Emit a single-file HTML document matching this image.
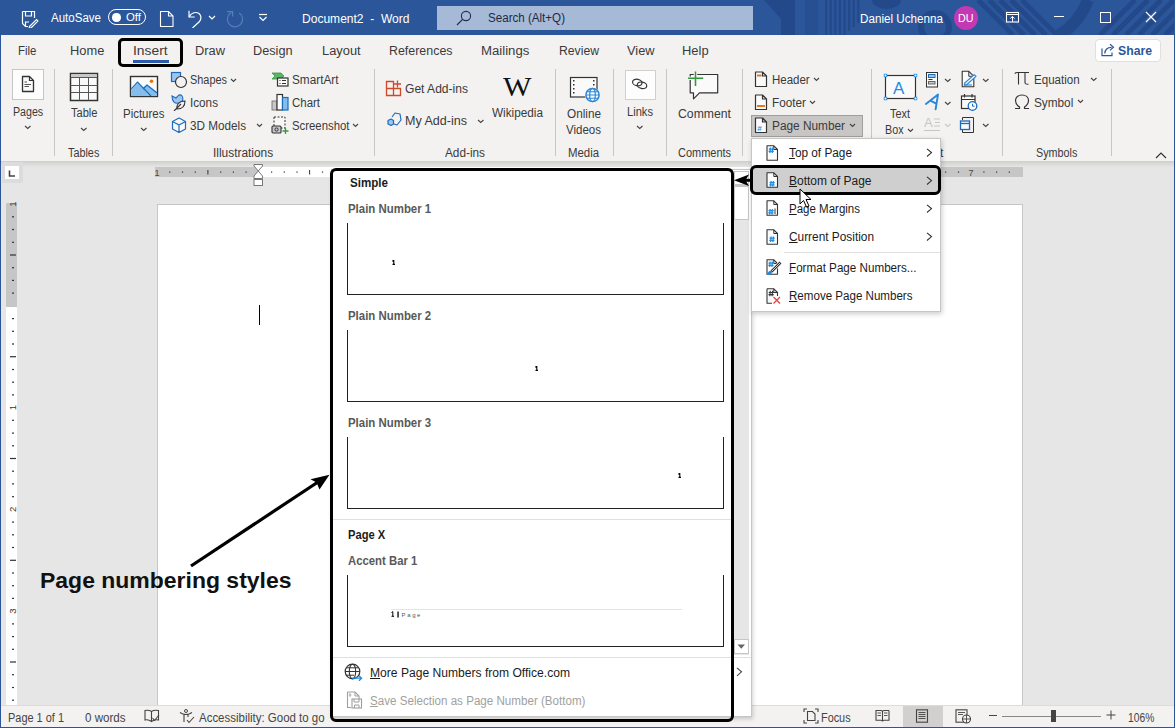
<!DOCTYPE html>
<html><head><meta charset="utf-8"><style>
html,body{margin:0;padding:0;}
body{width:1175px;height:728px;position:relative;overflow:hidden;background:#e6e6e6;font-family:"Liberation Sans", sans-serif;}
body>div,body>svg{position:absolute;box-sizing:border-box;}
.t{white-space:pre;}
</style></head><body>
<div style="left:0px;top:0px;width:1175px;height:35px;background:#2b579a"></div>
<svg style="left:755px;top:0px;" width="420" height="35" viewBox="0 0 420 35"><g transform="translate(-755 0)"><g fill="#23498a">
      <path d="M764 0 H795 V35 H781 V19 Z"/>
      <rect x="805" y="0" width="13" height="35" opacity="0.5"/>
      <rect x="825.0" y="0" width="2.2" height="35"/><rect x="829.6" y="0" width="2.2" height="35"/><rect x="834.2" y="0" width="2.2" height="35"/><rect x="838.8" y="0" width="2.2" height="35"/><rect x="843.4" y="0" width="2.2" height="35"/><rect x="848.0" y="0" width="2.2" height="31"/><rect x="852.6" y="0" width="2.2" height="27"/><rect x="857.2" y="0" width="2.2" height="23"/>
      <path d="M872 0 A14.5 9 0 0 0 901 0 Z"/>
      </g>
      <circle cx="935" cy="27" r="14" fill="none" stroke="#23498a" stroke-width="6"/>
      <g stroke="#23498a" stroke-width="5"><path d="M978 0 L1013 35" /><path d="M989 0 L1024 35" /><path d="M1000 0 L1035 35" /><path d="M1011 0 L1046 35" /><path d="M1022 0 L1057 35" /></g>
      <path d="M1088 0 C1082 15 1072 28 1058 36" fill="none" stroke="#23498a" stroke-width="12"/>
      <g stroke="#23498a" stroke-width="5"><path d="M1100 35 L1135 0" /><path d="M1113 35 L1148 0" /><path d="M1126 35 L1161 0" /><path d="M1139 35 L1174 0" /><path d="M1152 35 L1187 0" /><path d="M1165 35 L1200 0" /></g></g></svg>
<div style="left:0px;top:35px;width:1175px;height:126px;background:#f3f2f1"></div>
<div style="left:0px;top:161px;width:1175px;height:6px;background:linear-gradient(#cfcecd,#e6e6e6)"></div>
<div style="left:0px;top:705px;width:1175px;height:22px;background:#f3f2f1;border-top:1px solid #dedcda"></div>
<div style="left:0px;top:0px;width:1px;height:728px;background:#2b579a"></div>
<div style="left:1174px;top:0px;width:1px;height:728px;background:#2b579a"></div>
<div style="left:0px;top:727px;width:1175px;height:1px;background:#2b579a"></div>
<svg style="left:21px;top:10px;" width="18" height="18" viewBox="0 0 18 18"><path d="M1.5 1.5 H13.5 V8" fill="none" stroke="#fff" stroke-width="1.2"/><path d="M1.5 1.5 V13.5 L4.5 16.5 H7" fill="none" stroke="#fff" stroke-width="1.2"/><path d="M4.5 1.5 V6 H10.5 V1.5" fill="none" stroke="#fff" stroke-width="1.2"/><path d="M4.5 16.5 V12 H8" fill="none" stroke="#fff" stroke-width="1.2"/><path d="M8.5 16.5 L15.5 9.5 L17 11 L10 18 L8 18 Z" fill="none" stroke="#fff" stroke-width="1.1"/></svg>
<div class="t" style="left:51px;top:11.60px;font-size:12.5px;line-height:12.5px;font-weight:normal;color:#ffffff;transform:scaleX(0.9222);transform-origin:0 0;">AutoSave</div>
<div style="left:108px;top:9px;width:38px;height:16px;border:1.2px solid #fff;border-radius:8px"></div>
<div style="left:112px;top:13px;width:8.5px;height:8.5px;background:#fff;border-radius:50%"></div>
<div class="t" style="left:126px;top:11.54px;font-size:11px;line-height:11px;font-weight:normal;color:#ffffff;transform:scaleX(1.0356);transform-origin:0 0;">Off</div>
<svg style="left:159px;top:10px;" width="16" height="18" viewBox="0 0 16 18"><path d="M1.5 1.5 H9.5 L14 6 V16.5 H1.5 Z M9.5 1.5 V6 H14" fill="none" stroke="#fff" stroke-width="1.1"/></svg>
<svg style="left:187px;top:10px;" width="18" height="18" viewBox="0 0 18 18"><path d="M2 0.8 V7 H7.7" fill="none" stroke="#fff" stroke-width="1.2"/><path d="M2.3 6.6 C4.5 2.5 9 1.5 12 3.5 C14.5 5.5 14.5 9 12.5 11.5 L5.5 18" fill="none" stroke="#fff" stroke-width="1.2"/></svg>
<svg style="left:208px;top:15px;" width="8" height="5.5" viewBox="0 0 8 5.5"><path d="M1 1 L4.0 4.0 L7 1" fill="none" stroke="#fff" stroke-width="1.2"/></svg>
<svg style="left:226px;top:10px;" width="18" height="18" viewBox="0 0 18 18"><path d="M13.2 2.9 A7.6 7.6 0 1 1 5.2 2.6" fill="none" stroke="#5a7db8" stroke-width="1.2"/><path d="M1.2 1.6 H6.6 V6.5" fill="none" stroke="#5a7db8" stroke-width="1.2"/></svg>
<svg style="left:258px;top:13px;" width="10" height="9" viewBox="0 0 10 9"><path d="M1 1.5 H9" stroke="#fff" stroke-width="1.2"/><path d="M1.5 4 L5 7.5 L8.5 4" fill="none" stroke="#fff" stroke-width="1.2"/></svg>
<div class="t" style="left:302px;top:13.08px;font-size:12px;line-height:12px;font-weight:normal;color:#ffffff;transform:scaleX(1.0032);transform-origin:0 0;">Document2  -  Word</div>
<div style="left:437px;top:6px;width:316px;height:24px;background:#a6b9d6"></div>
<svg style="left:455px;top:10px;" width="18" height="16" viewBox="0 0 18 16"><circle cx="11" cy="6" r="4.6" fill="none" stroke="#1f2f4f" stroke-width="1.1"/><path d="M7.6 9.4 L2 15" stroke="#1f2f4f" stroke-width="1.2"/></svg>
<div class="t" style="left:487.5px;top:12.38px;font-size:12px;line-height:12px;font-weight:normal;color:#1b2a47;transform:scaleX(0.9661);transform-origin:0 0;">Search (Alt+Q)</div>
<div class="t" style="left:860px;top:13.08px;font-size:12px;line-height:12px;font-weight:normal;color:#ffffff;transform:scaleX(0.9720);transform-origin:0 0;">Daniel Uchenna</div>
<div style="left:954px;top:6px;width:24px;height:24px;background:#c239b3;border-radius:50%"></div>
<div class="t" style="left:958px;top:12.74px;font-size:11px;line-height:11px;font-weight:normal;color:#fff;transform:scaleX(0.9754);transform-origin:0 0;">DU</div>
<svg style="left:1005px;top:11px;" width="15" height="12" viewBox="0 0 15 12"><rect x="1.5" y="1.5" width="12" height="9.5" fill="none" stroke="#fff" stroke-width="1.1"/><path d="M1.5 3.5 H13.5" stroke="#fff" stroke-width="1"/><path d="M7.5 11 V5.5 M5.3 7.6 L7.5 5.4 L9.7 7.6" fill="none" stroke="#fff" stroke-width="1"/></svg>
<div style="left:1054px;top:16px;width:10px;height:1.1px;background:#fff"></div>
<div style="left:1100px;top:12px;width:10.5px;height:10.5px;border:1.1px solid #fff"></div>
<svg style="left:1145px;top:11px;" width="12" height="12" viewBox="0 0 12 12"><path d="M1 1 L11 11 M11 1 L1 11" stroke="#fff" stroke-width="1.2"/></svg>
<div class="t" style="left:18.4px;top:44.68px;font-size:12px;line-height:12px;font-weight:normal;color:#3a3a3a;transform:scaleX(0.9512);transform-origin:0 0;">File</div>
<div class="t" style="left:70px;top:44.68px;font-size:12px;line-height:12px;font-weight:normal;color:#3a3a3a;transform:scaleX(1.0714);transform-origin:0 0;">Home</div>
<div class="t" style="left:133.3px;top:44.68px;font-size:12px;line-height:12px;font-weight:normal;color:#3a3a3a;transform:scaleX(1.1527);transform-origin:0 0;">Insert</div>
<div class="t" style="left:195px;top:44.68px;font-size:12px;line-height:12px;font-weight:normal;color:#3a3a3a;transform:scaleX(1.0708);transform-origin:0 0;">Draw</div>
<div class="t" style="left:253px;top:44.68px;font-size:12px;line-height:12px;font-weight:normal;color:#3a3a3a;transform:scaleX(1.0600);transform-origin:0 0;">Design</div>
<div class="t" style="left:321.7px;top:44.68px;font-size:12px;line-height:12px;font-weight:normal;color:#3a3a3a;transform:scaleX(1.0713);transform-origin:0 0;">Layout</div>
<div class="t" style="left:389px;top:44.68px;font-size:12px;line-height:12px;font-weight:normal;color:#3a3a3a;transform:scaleX(1.0346);transform-origin:0 0;">References</div>
<div class="t" style="left:481px;top:44.68px;font-size:12px;line-height:12px;font-weight:normal;color:#3a3a3a;transform:scaleX(1.0996);transform-origin:0 0;">Mailings</div>
<div class="t" style="left:559px;top:44.68px;font-size:12px;line-height:12px;font-weight:normal;color:#3a3a3a;transform:scaleX(1.0163);transform-origin:0 0;">Review</div>
<div class="t" style="left:626.5px;top:44.68px;font-size:12px;line-height:12px;font-weight:normal;color:#3a3a3a;transform:scaleX(1.0660);transform-origin:0 0;">View</div>
<div class="t" style="left:681.7px;top:44.68px;font-size:12px;line-height:12px;font-weight:normal;color:#3a3a3a;transform:scaleX(1.0775);transform-origin:0 0;">Help</div>
<div style="left:133px;top:60px;width:35.5px;height:3px;background:#2a5aa8"></div>
<div style="left:118px;top:37.5px;width:65px;height:29px;border:3px solid #000;border-radius:5px"></div>
<div style="left:1094.5px;top:38.5px;width:66.5px;height:23px;background:#fff;border:1px solid #e1dfdd;border-radius:4px"></div>
<svg style="left:1101px;top:43px;" width="14" height="14" viewBox="0 0 14 14"><path d="M1 5.5 V12.6 H11 V9.5" fill="none" stroke="#2b579a" stroke-width="1.2"/><path d="M3.8 10.5 C4 6 7 4.3 10.6 4.3" fill="none" stroke="#2b579a" stroke-width="1.2"/><path d="M9 1.2 L12.5 4.3 L9 7.4" fill="none" stroke="#2b579a" stroke-width="1.2"/></svg>
<div class="t" style="left:1118px;top:45.08px;font-size:12px;line-height:12px;font-weight:bold;color:#2b579a;transform:scaleX(1.0192);transform-origin:0 0;">Share</div>
<div style="left:54px;top:69px;width:1px;height:87px;background:#c8c6c4"></div>
<div style="left:112px;top:69px;width:1px;height:87px;background:#c8c6c4"></div>
<div style="left:374px;top:69px;width:1px;height:87px;background:#c8c6c4"></div>
<div style="left:555px;top:69px;width:1px;height:87px;background:#c8c6c4"></div>
<div style="left:613px;top:69px;width:1px;height:87px;background:#c8c6c4"></div>
<div style="left:666px;top:69px;width:1px;height:87px;background:#c8c6c4"></div>
<div style="left:742px;top:69px;width:1px;height:87px;background:#c8c6c4"></div>
<div style="left:871px;top:69px;width:1px;height:87px;background:#c8c6c4"></div>
<div style="left:1002px;top:69px;width:1px;height:87px;background:#c8c6c4"></div>
<div style="left:1111px;top:69px;width:1px;height:87px;background:#c8c6c4"></div>
<div class="t" style="left:68.2px;top:147.28px;font-size:12px;line-height:12px;font-weight:normal;color:#3a3a3a;transform:scaleX(0.9023);transform-origin:0 0;">Tables</div>
<div class="t" style="left:213.4px;top:147.28px;font-size:12px;line-height:12px;font-weight:normal;color:#3a3a3a;transform:scaleX(0.9917);transform-origin:0 0;">Illustrations</div>
<div class="t" style="left:444.9px;top:147.28px;font-size:12px;line-height:12px;font-weight:normal;color:#3a3a3a;transform:scaleX(0.9831);transform-origin:0 0;">Add-ins</div>
<div class="t" style="left:568.3px;top:147.28px;font-size:12px;line-height:12px;font-weight:normal;color:#3a3a3a;transform:scaleX(0.9514);transform-origin:0 0;">Media</div>
<div class="t" style="left:677.6px;top:147.28px;font-size:12px;line-height:12px;font-weight:normal;color:#3a3a3a;transform:scaleX(0.9153);transform-origin:0 0;">Comments</div>
<div class="t" style="left:1036.4px;top:147.28px;font-size:12px;line-height:12px;font-weight:normal;color:#3a3a3a;transform:scaleX(0.8975);transform-origin:0 0;">Symbols</div>
<svg style="left:1155px;top:151.5px;" width="12" height="7" viewBox="0 0 12 7"><path d="M1 6 L6 1 L11 6" fill="none" stroke="#333" stroke-width="1.2"/></svg>
<div style="left:12px;top:69px;width:32px;height:31px;background:#fdfdfd;border:1px solid #c8c6c4"></div>
<svg style="left:21px;top:75px;" width="14" height="18" viewBox="0 0 14 18"><path d="M1.5 1.5 H8.5 L12.5 5.5 V16.5 H1.5 Z" fill="#fafafa" stroke="#333" stroke-width="1.3" stroke-linejoin="round"/><path d="M8.5 1.5 V5.5 H12.5" fill="none" stroke="#333" stroke-width="1.2"/><path d="M3.5 7 H6 M3.5 9.5 H10 M3.5 11.5 H8" stroke="#555" stroke-width="1"/></svg>
<div class="t" style="left:12.6px;top:105.88px;font-size:12px;line-height:12px;font-weight:normal;color:#3a3a3a;transform:scaleX(0.8874);transform-origin:0 0;">Pages</div>
<svg style="left:24px;top:125px;" width="7.5" height="5" viewBox="0 0 7.5 5"><path d="M1 1 L3.75 3.5 L6.5 1" fill="none" stroke="#444" stroke-width="1.1"/></svg>
<svg style="left:69px;top:72px;" width="30" height="30" viewBox="0 0 30 30"><rect x="1.5" y="1.5" width="27" height="27" fill="#fafafa" stroke="#333" stroke-width="1.5"/><rect x="2.2" y="2.2" width="25.6" height="3.6" fill="#c8c8c8"/><path d="M1.5 5.5 H28.5 M1.5 13.5 H28.5 M1.5 20.5 H28.5 M10.5 5.5 V28.5 M19.5 5.5 V28.5" stroke="#555" stroke-width="1"/></svg>
<div class="t" style="left:70.7px;top:107.38px;font-size:12px;line-height:12px;font-weight:normal;color:#3a3a3a;transform:scaleX(0.9237);transform-origin:0 0;">Table</div>
<svg style="left:80px;top:126.5px;" width="7.5" height="5" viewBox="0 0 7.5 5"><path d="M1 1 L3.75 3.5 L6.5 1" fill="none" stroke="#444" stroke-width="1.1"/></svg>
<svg style="left:129px;top:75px;" width="30" height="23" viewBox="0 0 30 23"><rect x="1.5" y="1.5" width="27" height="20" fill="#fafafa" stroke="#333" stroke-width="1.4"/><path d="M2 14 L8.5 7 L18 17 L14 21 Z" fill="#83beec"/><path d="M2.2 14 V21 H19 L8.5 7 Z" fill="#83beec"/><path d="M13 13 L18 9.5 L28 17 V21 H19 Z" fill="#83beec"/><path d="M2 14 L8.5 7 L22 21 M14 14 L18 10 L28 18" fill="none" stroke="#1c6bbd" stroke-width="1.1"/><circle cx="22.5" cy="6.3" r="1.8" fill="#e3730b"/></svg>
<div class="t" style="left:123.3px;top:108.38px;font-size:12px;line-height:12px;font-weight:normal;color:#3a3a3a;transform:scaleX(0.9548);transform-origin:0 0;">Pictures</div>
<svg style="left:140px;top:127px;" width="7.5" height="5" viewBox="0 0 7.5 5"><path d="M1 1 L3.75 3.5 L6.5 1" fill="none" stroke="#444" stroke-width="1.1"/></svg>
<svg style="left:170px;top:71px;" width="18" height="18" viewBox="0 0 18 18"><rect x="1.5" y="1.5" width="9" height="9" fill="#9cc6ef" stroke="#1c6bbd" stroke-width="1.2"/><circle cx="11" cy="11" r="5.5" fill="#f3f2f1" stroke="#333" stroke-width="1.2"/></svg>
<div class="t" style="left:190px;top:73.58px;font-size:12px;line-height:12px;font-weight:normal;color:#3a3a3a;transform:scaleX(0.9090);transform-origin:0 0;">Shapes</div>
<svg style="left:230px;top:77.5px;" width="7" height="5" viewBox="0 0 7 5"><path d="M1 1 L3.5 3.5 L6 1" fill="none" stroke="#444" stroke-width="1.1"/></svg>
<svg style="left:170px;top:93px;" width="18" height="18" viewBox="0 0 18 18"><path d="M2 3 C2 9 5 11 9 10 C13 9 14 6 12 3 C11 1.5 9 1.5 8 3 L6 5 Z" fill="#9cc6ef" stroke="#1c6bbd" stroke-width="1.1"/><path d="M7 16 C6 12 9 8 15 8 C15 13 12 16 7 16 Z M4 18 L11 11" fill="#f3f2f1" stroke="#333" stroke-width="1.1"/></svg>
<div class="t" style="left:190px;top:96.58px;font-size:12px;line-height:12px;font-weight:normal;color:#3a3a3a;transform:scaleX(0.9760);transform-origin:0 0;">Icons</div>
<svg style="left:171px;top:117px;" width="16" height="17" viewBox="0 0 16 17"><path d="M8 1 L14.5 4.5 V12 L8 15.5 L1.5 12 V4.5 Z M1.5 4.5 L8 8 L14.5 4.5 M8 8 V15.5" fill="#fafafa" stroke="#1c6bbd" stroke-width="1.2" stroke-linejoin="round"/></svg>
<div class="t" style="left:190px;top:119.58px;font-size:12px;line-height:12px;font-weight:normal;color:#3a3a3a;transform:scaleX(0.9763);transform-origin:0 0;">3D Models</div>
<svg style="left:256px;top:123px;" width="7" height="5" viewBox="0 0 7 5"><path d="M1 1 L3.5 3.5 L6 1" fill="none" stroke="#444" stroke-width="1.1"/></svg>
<svg style="left:271px;top:72px;" width="18" height="15" viewBox="0 0 18 15"><path d="M1 1 H10 L13 4 L10 7 H1 L4 4 Z" fill="#5fb36b" stroke="#2e9b3e" stroke-width="0.8"/><rect x="6.5" y="6" width="10.5" height="8" fill="#fafafa" stroke="#333" stroke-width="1.2"/><path d="M8.5 8.5 H9.5 M11 8.5 H15 M8.5 11.5 H9.5 M11 11.5 H15" stroke="#333" stroke-width="1"/></svg>
<div class="t" style="left:291.5px;top:73.58px;font-size:12px;line-height:12px;font-weight:normal;color:#3a3a3a;transform:scaleX(0.9822);transform-origin:0 0;">SmartArt</div>
<svg style="left:271px;top:93px;" width="18" height="18" viewBox="0 0 18 18"><rect x="1" y="8" width="5" height="9" fill="#c8c8c8" stroke="#666" stroke-width="0.8"/><rect x="6" y="1.5" width="5.5" height="15.5" fill="#fff" stroke="#333" stroke-width="1.2"/><rect x="11.5" y="4.5" width="5.5" height="12.5" fill="#83beec" stroke="#1c6bbd" stroke-width="1.2"/></svg>
<div class="t" style="left:291.5px;top:96.58px;font-size:12px;line-height:12px;font-weight:normal;color:#3a3a3a;transform:scaleX(0.9542);transform-origin:0 0;">Chart</div>
<svg style="left:271px;top:116px;" width="19" height="18" viewBox="0 0 19 18"><rect x="3" y="1" width="11" height="11" fill="#f7f7f7" stroke="#333" stroke-width="1" stroke-dasharray="2 1.5"/><rect x="1" y="10" width="9" height="7" rx="1" fill="#c8c8c8" stroke="#333" stroke-width="1.1"/><circle cx="5.5" cy="13.5" r="1.6" fill="none" stroke="#333" stroke-width="1"/><path d="M14.5 12 V18 M11.5 15 H17.5" stroke="#2e9b3e" stroke-width="1.3"/></svg>
<div class="t" style="left:291.5px;top:119.58px;font-size:12px;line-height:12px;font-weight:normal;color:#3a3a3a;transform:scaleX(0.9472);transform-origin:0 0;">Screenshot</div>
<svg style="left:352px;top:122.5px;" width="7" height="5" viewBox="0 0 7 5"><path d="M1 1 L3.5 3.5 L6 1" fill="none" stroke="#444" stroke-width="1.1"/></svg>
<svg style="left:385px;top:80px;" width="18" height="17" viewBox="0 0 18 17"><path d="M1.5 1.5 H8.5 V15.5 H1.5 Z M1.5 8.5 H15.5 V15.5 H8.5" fill="none" stroke="#d24726" stroke-width="1.3"/><path d="M12.5 0.5 V7.5 M9 4 H16" stroke="#d24726" stroke-width="1.3"/></svg>
<div class="t" style="left:405px;top:82.58px;font-size:12px;line-height:12px;font-weight:normal;color:#3a3a3a;transform:scaleX(1.0047);transform-origin:0 0;">Get Add-ins</div>
<svg style="left:385px;top:111px;" width="18" height="18" viewBox="0 0 18 18"><path d="M7 6 L10 2 L15 3 L16 9 L12 14 L9 13" fill="none" stroke="#1c6bbd" stroke-width="1.2" stroke-linejoin="round"/><path d="M3 9.5 L6 8 L8.5 9.5 V13 L6 14.5 L3 13 Z" fill="#9cc6ef" stroke="#1c6bbd" stroke-width="1.2" stroke-linejoin="round"/></svg>
<div class="t" style="left:405px;top:115.38px;font-size:12px;line-height:12px;font-weight:normal;color:#3a3a3a;transform:scaleX(1.0445);transform-origin:0 0;">My Add-ins</div>
<svg style="left:476.5px;top:118.5px;" width="7.5" height="5" viewBox="0 0 7.5 5"><path d="M1 1 L3.75 3.5 L6.5 1" fill="none" stroke="#444" stroke-width="1.1"/></svg>
<div class="t" style="left:503px;top:73.68px;font-size:27px;line-height:27px;font-weight:normal;color:#111;transform:scaleX(1.1183);transform-origin:0 0;font-family:'Liberation Serif',serif;">W</div>
<div class="t" style="left:492.3px;top:107.08px;font-size:12px;line-height:12px;font-weight:normal;color:#3a3a3a;transform:scaleX(0.9802);transform-origin:0 0;">Wikipedia</div>
<svg style="left:568px;top:75px;" width="34" height="30" viewBox="0 0 34 30"><rect x="2.5" y="2.5" width="26.5" height="19.5" fill="#fafafa" stroke="#333" stroke-width="1.2"/><g fill="#333"><rect x="5" y="5" width="1.5" height="1.5"/><rect x="5" y="9" width="1.5" height="1.5"/><rect x="5" y="13" width="1.5" height="1.5"/><rect x="5" y="17" width="1.5" height="1.5"/><rect x="25" y="5" width="1.5" height="1.5"/><rect x="25" y="9" width="1.5" height="1.5"/></g><circle cx="24.5" cy="20" r="7.6" fill="#f3f2f1"/><circle cx="24.5" cy="20" r="6.6" fill="#fafafa" stroke="#2b88d8" stroke-width="1.5"/><ellipse cx="24.5" cy="20" rx="2.8" ry="6.6" fill="none" stroke="#2b88d8" stroke-width="1.2"/><path d="M18 20 H31 M19 16.8 H30 M19 23.2 H30" stroke="#2b88d8" stroke-width="1.1"/></svg>
<div class="t" style="left:566.8px;top:108.08px;font-size:12px;line-height:12px;font-weight:normal;color:#3a3a3a;transform:scaleX(0.9802);transform-origin:0 0;">Online</div>
<div class="t" style="left:566px;top:124.08px;font-size:12px;line-height:12px;font-weight:normal;color:#3a3a3a;transform:scaleX(0.9593);transform-origin:0 0;">Videos</div>
<div style="left:624.5px;top:69.5px;width:31.5px;height:30px;background:#fdfdfd;border:1px solid #d2d0ce"></div>
<svg style="left:631px;top:77px;" width="18" height="14" viewBox="0 0 18 14"><ellipse cx="6.3" cy="5.5" rx="4.8" ry="3.2" fill="none" stroke="#333" stroke-width="1.2" transform="rotate(12 6.3 5.5)"/><ellipse cx="11" cy="8.3" rx="4.8" ry="3.2" fill="none" stroke="#333" stroke-width="1.2" transform="rotate(12 11 8.3)"/></svg>
<div class="t" style="left:626.5px;top:106.08px;font-size:12px;line-height:12px;font-weight:normal;color:#3a3a3a;transform:scaleX(0.9281);transform-origin:0 0;">Links</div>
<svg style="left:636px;top:125px;" width="7.5" height="5" viewBox="0 0 7.5 5"><path d="M1 1 L3.75 3.5 L6.5 1" fill="none" stroke="#444" stroke-width="1.1"/></svg>
<svg style="left:686px;top:70px;" width="34" height="32" viewBox="0 0 34 32"><path d="M4.2 4.5 H31.7 V22.8 H13.5 L7.5 28.9 V22.8 H4.2 Z" fill="#fafafa" stroke="#333" stroke-width="1.2" stroke-linejoin="round"/><path d="M9.5 1.4 V15.9 M2 8.3 H17.2" stroke="#f3f2f1" stroke-width="3.5"/><path d="M9.5 1.4 V15.9 M2 8.3 H17.2" stroke="#2e9b3e" stroke-width="1.5"/></svg>
<div class="t" style="left:677.6px;top:107.68px;font-size:12px;line-height:12px;font-weight:normal;color:#3a3a3a;transform:scaleX(1.0189);transform-origin:0 0;">Comment</div>
<svg style="left:754px;top:71px;" width="14" height="17" viewBox="0 0 14 17"><path d="M1.5 1 H8.5 L12.5 5 V15.5 H1.5 Z M8.5 1 V5 H12.5" fill="#fafafa" stroke="#333" stroke-width="1.2" stroke-linejoin="round"/><rect x="3" y="3.5" width="4.5" height="2" fill="#e37620"/></svg>
<div class="t" style="left:772px;top:73.58px;font-size:12px;line-height:12px;font-weight:normal;color:#3a3a3a;transform:scaleX(0.9578);transform-origin:0 0;">Header</div>
<svg style="left:813px;top:77px;" width="7" height="5" viewBox="0 0 7 5"><path d="M1 1 L3.5 3.5 L6 1" fill="none" stroke="#444" stroke-width="1.1"/></svg>
<svg style="left:754px;top:94px;" width="14" height="17" viewBox="0 0 14 17"><path d="M1.5 1 H8.5 L12.5 5 V15.5 H1.5 Z M8.5 1 V5 H12.5" fill="#fafafa" stroke="#333" stroke-width="1.2" stroke-linejoin="round"/><rect x="3" y="11" width="8" height="2" fill="#e37620"/></svg>
<div class="t" style="left:772px;top:96.58px;font-size:12px;line-height:12px;font-weight:normal;color:#3a3a3a;transform:scaleX(0.9802);transform-origin:0 0;">Footer</div>
<svg style="left:809px;top:99.8px;" width="7" height="5" viewBox="0 0 7 5"><path d="M1 1 L3.5 3.5 L6 1" fill="none" stroke="#444" stroke-width="1.1"/></svg>
<div style="left:750.5px;top:114.5px;width:112.5px;height:22px;background:#c8c6c4;border:1px solid #a19f9d"></div>
<svg style="left:754px;top:117px;" width="14" height="17" viewBox="0 0 14 17"><path d="M1.5 1 H8.5 L12.5 5 V15.5 H1.5 Z M8.5 1 V5 H12.5" fill="#fafafa" stroke="#333" stroke-width="1.2" stroke-linejoin="round"/><text x="3.2" y="13.5" font-size="8" font-weight="bold" fill="#1c8ee6" font-family="Liberation Sans">#</text></svg>
<div class="t" style="left:772px;top:119.58px;font-size:12px;line-height:12px;font-weight:normal;color:#3a3a3a;transform:scaleX(0.9859);transform-origin:0 0;">Page Number</div>
<svg style="left:848.5px;top:122.5px;" width="7" height="5" viewBox="0 0 7 5"><path d="M1 1 L3.5 3.5 L6 1" fill="none" stroke="#444" stroke-width="1.1"/></svg>
<svg style="left:883px;top:73px;" width="35" height="28" viewBox="0 0 35 28"><rect x="2.5" y="2.5" width="30" height="23" fill="#fafafa" stroke="#333" stroke-width="1.2"/><g fill="#1c8ee6"><rect x="0.8" y="0.8" width="3.4" height="3.4"/><rect x="30.8" y="0.8" width="3.4" height="3.4"/><rect x="0.8" y="23.8" width="3.4" height="3.4"/><rect x="30.8" y="23.8" width="3.4" height="3.4"/></g><rect x="1.6" y="1.6" width="1.8" height="1.8" fill="#fff"/><rect x="31.6" y="1.6" width="1.8" height="1.8" fill="#fff"/><rect x="1.6" y="24.6" width="1.8" height="1.8" fill="#fff"/><rect x="31.6" y="24.6" width="1.8" height="1.8" fill="#fff"/><text x="10" y="21" font-size="17" fill="#1c8ee6" font-family="Liberation Sans">A</text></svg>
<div class="t" style="left:889.5px;top:107.88px;font-size:12px;line-height:12px;font-weight:normal;color:#3a3a3a;transform:scaleX(0.9084);transform-origin:0 0;">Text</div>
<div class="t" style="left:884.7px;top:123.88px;font-size:12px;line-height:12px;font-weight:normal;color:#3a3a3a;transform:scaleX(0.8943);transform-origin:0 0;">Box</div>
<svg style="left:907px;top:127.5px;" width="7" height="5" viewBox="0 0 7 5"><path d="M1 1 L3.5 3.5 L6 1" fill="none" stroke="#444" stroke-width="1.1"/></svg>
<svg style="left:925px;top:71px;" width="14" height="17" viewBox="0 0 14 17"><rect x="1.5" y="1.5" width="11" height="14.5" fill="#fafafa" stroke="#333" stroke-width="1"/><rect x="3.5" y="3.5" width="6.5" height="3" fill="#9cc6ef" stroke="#1c6bbd" stroke-width="1"/><path d="M3.5 8.5 H7.5" stroke="#333" stroke-width="1"/><rect x="3.5" y="10.5" width="6.5" height="2.5" fill="#c8c8c8" stroke="#666" stroke-width="1"/></svg>
<svg style="left:943.5px;top:78px;" width="7.5" height="5" viewBox="0 0 7.5 5"><path d="M1 1 L3.75 3.5 L6.5 1" fill="none" stroke="#444" stroke-width="1.1"/></svg>
<svg style="left:924px;top:93px;" width="16" height="18" viewBox="0 0 16 18"><path d="M1.9 10.9 L14 1.5 L11.6 16.3 M6.5 7.6 L12.2 10.6" fill="none" stroke="#2b88d8" stroke-width="1.9" stroke-linejoin="round" stroke-linecap="round"/></svg>
<svg style="left:943.5px;top:100.5px;" width="7.5" height="5" viewBox="0 0 7.5 5"><path d="M1 1 L3.75 3.5 L6.5 1" fill="none" stroke="#444" stroke-width="1.1"/></svg>
<svg style="left:924px;top:115px;" width="18" height="17" viewBox="0 0 18 17"><text x="0" y="12" font-size="13" fill="#c8c6c4" font-family="Liberation Sans">A</text><path d="M10 4 H16 M11 7.5 H16 M10 11 H16 M0 15.5 H16" stroke="#c8c6c4" stroke-width="1"/></svg>
<svg style="left:943.5px;top:123px;" width="7.5" height="5" viewBox="0 0 7.5 5"><path d="M1 1 L3.75 3.5 L6.5 1" fill="none" stroke="#c8c6c4" stroke-width="1.1"/></svg>
<svg style="left:960px;top:70px;" width="18" height="18" viewBox="0 0 18 18"><path d="M2.2 1.3 H8.8 L13.8 6.3 V16.7 H2.2 Z" fill="#fafafa" stroke="#333" stroke-width="1.1" stroke-linejoin="round"/><path d="M8.8 1.3 V6.3 H13.8" fill="none" stroke="#333" stroke-width="1"/><path d="M4.8 13 L14.2 4.6 L16 6.4 L6.6 14.8 L4.3 15.2 Z" fill="#fafafa" stroke="#2b88d8" stroke-width="1.2" stroke-linejoin="round"/><path d="M4 15 H12" stroke="#2b88d8" stroke-width="1.1"/></svg>
<svg style="left:982px;top:78px;" width="7.5" height="5" viewBox="0 0 7.5 5"><path d="M1 1 L3.75 3.5 L6.5 1" fill="none" stroke="#444" stroke-width="1.1"/></svg>
<svg style="left:960px;top:93px;" width="18" height="18" viewBox="0 0 18 18"><rect x="1.5" y="3" width="13.5" height="12.5" fill="#fafafa" stroke="#333" stroke-width="1.2"/><path d="M1.5 6.5 H15 M4.5 1 V4.5 M12 1 V4.5" stroke="#333" stroke-width="1.2"/><circle cx="12.5" cy="13" r="4.3" fill="#fafafa" stroke="#1c6bbd" stroke-width="1.3"/><path d="M12.5 10.8 V13.2 H14.5" fill="none" stroke="#1c6bbd" stroke-width="1"/></svg>
<svg style="left:959px;top:116px;" width="16" height="18" viewBox="0 0 16 18"><path d="M3.5 4 V1.5 H14.5 V16.5 H3.5 V13.5" fill="none" stroke="#333" stroke-width="1"/><rect x="1.5" y="5" width="9" height="8.5" fill="#fafafa" stroke="#1c6bbd" stroke-width="1.3"/><path d="M1.5 7.5 H10.5" stroke="#1c6bbd" stroke-width="1.3"/></svg>
<svg style="left:982px;top:123px;" width="7.5" height="5" viewBox="0 0 7.5 5"><path d="M1 1 L3.75 3.5 L6.5 1" fill="none" stroke="#444" stroke-width="1.1"/></svg>
<svg style="left:1014px;top:71px;" width="16" height="15" viewBox="0 0 16 15"><path d="M0.8 2.6 C1.3 1.8 2.2 1.5 3.5 1.5 H15 M4.5 1.5 V13.5 M11 1.5 V11.3 C11 12.8 12 13.4 14.5 13.2" fill="none" stroke="#333" stroke-width="1.1"/></svg>
<div class="t" style="left:1033.7px;top:73.58px;font-size:12px;line-height:12px;font-weight:normal;color:#3a3a3a;transform:scaleX(0.9625);transform-origin:0 0;">Equation</div>
<svg style="left:1089.5px;top:77.3px;" width="7.5" height="5" viewBox="0 0 7.5 5"><path d="M1 1 L3.75 3.5 L6.5 1" fill="none" stroke="#444" stroke-width="1.1"/></svg>
<svg style="left:1014px;top:94px;" width="16" height="16" viewBox="0 0 16 16"><path d="M1 14.5 H5.5 V13 C2.5 11 1.5 8.5 1.5 6.5 C1.5 3.2 4.3 1 8 1 C11.7 1 14.5 3.2 14.5 6.5 C14.5 8.5 13.5 11 10.5 13 V14.5 H15" fill="none" stroke="#333" stroke-width="1.2"/></svg>
<div class="t" style="left:1033.7px;top:96.58px;font-size:12px;line-height:12px;font-weight:normal;color:#3a3a3a;transform:scaleX(0.9821);transform-origin:0 0;">Symbol</div>
<svg style="left:1077px;top:99.3px;" width="7" height="5" viewBox="0 0 7 5"><path d="M1 1 L3.5 3.5 L6 1" fill="none" stroke="#444" stroke-width="1.1"/></svg>
<div class="t" style="left:940px;top:147.28px;font-size:12px;line-height:12px;font-weight:normal;color:#3a3a3a;">t</div>
<div style="left:2px;top:162px;width:21px;height:21px;background:#dcdcdc"></div>
<div style="left:5px;top:166px;width:14px;height:13px;background:#fff"></div>
<svg style="left:8px;top:170px;" width="8" height="8" viewBox="0 0 8 8"><path d="M1.5 0.5 V6 H7" fill="none" stroke="#444" stroke-width="1.6"/></svg>
<div style="left:157px;top:204px;width:866px;height:501px;background:#fff;border:1px solid #c6c6c6;border-bottom:none"></div>
<div style="left:155px;top:167px;width:104px;height:10px;background:#c6c6c6"></div>
<div style="left:259px;top:167px;width:661px;height:10px;background:#fff"></div>
<div style="left:920px;top:167px;width:103px;height:10px;background:#c6c6c6"></div>
<svg style="left:150px;top:167px;" width="874" height="10" viewBox="0 0 874 10"><g transform="translate(8 0)"><text x="-1.0" y="9" font-size="9" fill="#444" text-anchor="middle" font-family="Liberation Sans">1</text><rect x="11.2" y="4.5" width="1.2" height="1.2" fill="#333"/><rect x="23.9" y="4.5" width="1.2" height="1.2" fill="#333"/><rect x="36.7" y="4.5" width="1.2" height="1.2" fill="#333"/><rect x="49.4" y="3" width="1" height="4.5" fill="#333"/><rect x="62.1" y="4.5" width="1.2" height="1.2" fill="#333"/><rect x="74.8" y="4.5" width="1.2" height="1.2" fill="#333"/><rect x="87.5" y="4.5" width="1.2" height="1.2" fill="#333"/><rect x="113.0" y="4.5" width="1.2" height="1.2" fill="#333"/><rect x="125.7" y="4.5" width="1.2" height="1.2" fill="#333"/><rect x="138.4" y="4.5" width="1.2" height="1.2" fill="#333"/><rect x="151.1" y="3" width="1" height="4.5" fill="#333"/><rect x="163.9" y="4.5" width="1.2" height="1.2" fill="#333"/><rect x="176.6" y="4.5" width="1.2" height="1.2" fill="#333"/><rect x="189.3" y="4.5" width="1.2" height="1.2" fill="#333"/><text x="202.5" y="9" font-size="9" fill="#444" text-anchor="middle" font-family="Liberation Sans">1</text><rect x="214.7" y="4.5" width="1.2" height="1.2" fill="#333"/><rect x="227.5" y="4.5" width="1.2" height="1.2" fill="#333"/><rect x="240.2" y="4.5" width="1.2" height="1.2" fill="#333"/><rect x="252.9" y="3" width="1" height="4.5" fill="#333"/><rect x="265.6" y="4.5" width="1.2" height="1.2" fill="#333"/><rect x="278.3" y="4.5" width="1.2" height="1.2" fill="#333"/><rect x="291.1" y="4.5" width="1.2" height="1.2" fill="#333"/><text x="304.3" y="9" font-size="9" fill="#444" text-anchor="middle" font-family="Liberation Sans">2</text><rect x="316.5" y="4.5" width="1.2" height="1.2" fill="#333"/><rect x="329.2" y="4.5" width="1.2" height="1.2" fill="#333"/><rect x="341.9" y="4.5" width="1.2" height="1.2" fill="#333"/><rect x="354.7" y="3" width="1" height="4.5" fill="#333"/><rect x="367.4" y="4.5" width="1.2" height="1.2" fill="#333"/><rect x="380.1" y="4.5" width="1.2" height="1.2" fill="#333"/><rect x="392.8" y="4.5" width="1.2" height="1.2" fill="#333"/><text x="406.0" y="9" font-size="9" fill="#444" text-anchor="middle" font-family="Liberation Sans">3</text><rect x="418.3" y="4.5" width="1.2" height="1.2" fill="#333"/><rect x="431.0" y="4.5" width="1.2" height="1.2" fill="#333"/><rect x="443.7" y="4.5" width="1.2" height="1.2" fill="#333"/><rect x="456.4" y="3" width="1" height="4.5" fill="#333"/><rect x="469.1" y="4.5" width="1.2" height="1.2" fill="#333"/><rect x="481.9" y="4.5" width="1.2" height="1.2" fill="#333"/><rect x="494.6" y="4.5" width="1.2" height="1.2" fill="#333"/><text x="507.8" y="9" font-size="9" fill="#444" text-anchor="middle" font-family="Liberation Sans">4</text><rect x="520.0" y="4.5" width="1.2" height="1.2" fill="#333"/><rect x="532.7" y="4.5" width="1.2" height="1.2" fill="#333"/><rect x="545.5" y="4.5" width="1.2" height="1.2" fill="#333"/><rect x="558.2" y="3" width="1" height="4.5" fill="#333"/><rect x="570.9" y="4.5" width="1.2" height="1.2" fill="#333"/><rect x="583.6" y="4.5" width="1.2" height="1.2" fill="#333"/><rect x="596.3" y="4.5" width="1.2" height="1.2" fill="#333"/><text x="609.6" y="9" font-size="9" fill="#444" text-anchor="middle" font-family="Liberation Sans">5</text><rect x="621.8" y="4.5" width="1.2" height="1.2" fill="#333"/><rect x="634.5" y="4.5" width="1.2" height="1.2" fill="#333"/><rect x="647.2" y="4.5" width="1.2" height="1.2" fill="#333"/><rect x="659.9" y="3" width="1" height="4.5" fill="#333"/><rect x="672.7" y="4.5" width="1.2" height="1.2" fill="#333"/><rect x="685.4" y="4.5" width="1.2" height="1.2" fill="#333"/><rect x="698.1" y="4.5" width="1.2" height="1.2" fill="#333"/><text x="711.3" y="9" font-size="9" fill="#444" text-anchor="middle" font-family="Liberation Sans">6</text><rect x="723.5" y="4.5" width="1.2" height="1.2" fill="#333"/><rect x="736.3" y="4.5" width="1.2" height="1.2" fill="#333"/><rect x="749.0" y="4.5" width="1.2" height="1.2" fill="#333"/><rect x="761.7" y="3" width="1" height="4.5" fill="#333"/><rect x="774.4" y="4.5" width="1.2" height="1.2" fill="#333"/><rect x="787.1" y="4.5" width="1.2" height="1.2" fill="#333"/><rect x="799.9" y="4.5" width="1.2" height="1.2" fill="#333"/><text x="813.1" y="9" font-size="9" fill="#444" text-anchor="middle" font-family="Liberation Sans">7</text><rect x="825.3" y="4.5" width="1.2" height="1.2" fill="#333"/><rect x="838.0" y="4.5" width="1.2" height="1.2" fill="#333"/><rect x="850.7" y="4.5" width="1.2" height="1.2" fill="#333"/></g></svg>
<svg style="left:253px;top:163px;" width="11" height="24" viewBox="0 0 11 24"><path d="M1 1.5 H9.5 V3 L5.25 8 L9.5 13 V15.5 H1 V13 L5.25 8 L1 3 Z" fill="#fff" stroke="#777" stroke-width="1"/><rect x="1" y="16.5" width="8.5" height="6" fill="#fff" stroke="#777" stroke-width="1"/></svg>
<div style="left:6px;top:203px;width:11px;height:104px;background:#c6c6c6"></div>
<div style="left:6px;top:307px;width:11px;height:398px;background:#fff"></div>
<svg style="left:6px;top:198px;" width="11" height="507" viewBox="0 0 11 507"><g transform="translate(0 5)"><text x="0" y="0" font-size="9.5" fill="#333" text-anchor="middle" font-family="Liberation Sans" transform="translate(6.8 1.0) rotate(-90) translate(0 3.4)">1</text><rect x="6" y="13.2" width="2" height="1.2" fill="#333"/><rect x="6" y="25.9" width="2" height="1.2" fill="#333"/><rect x="6" y="38.7" width="2" height="1.2" fill="#333"/><rect x="4" y="51.4" width="6" height="1.2" fill="#333"/><rect x="6" y="64.1" width="2" height="1.2" fill="#333"/><rect x="6" y="76.8" width="2" height="1.2" fill="#333"/><rect x="6" y="89.5" width="2" height="1.2" fill="#333"/><rect x="6" y="115.0" width="2" height="1.2" fill="#333"/><rect x="6" y="127.7" width="2" height="1.2" fill="#333"/><rect x="6" y="140.4" width="2" height="1.2" fill="#333"/><rect x="4" y="153.1" width="6" height="1.2" fill="#333"/><rect x="6" y="165.9" width="2" height="1.2" fill="#333"/><rect x="6" y="178.6" width="2" height="1.2" fill="#333"/><rect x="6" y="191.3" width="2" height="1.2" fill="#333"/><text x="0" y="0" font-size="9.5" fill="#333" text-anchor="middle" font-family="Liberation Sans" transform="translate(6.8 204.5) rotate(-90) translate(0 3.4)">1</text><rect x="6" y="216.7" width="2" height="1.2" fill="#333"/><rect x="6" y="229.5" width="2" height="1.2" fill="#333"/><rect x="6" y="242.2" width="2" height="1.2" fill="#333"/><rect x="4" y="254.9" width="6" height="1.2" fill="#333"/><rect x="6" y="267.6" width="2" height="1.2" fill="#333"/><rect x="6" y="280.3" width="2" height="1.2" fill="#333"/><rect x="6" y="293.1" width="2" height="1.2" fill="#333"/><text x="0" y="0" font-size="9.5" fill="#333" text-anchor="middle" font-family="Liberation Sans" transform="translate(6.8 306.3) rotate(-90) translate(0 3.4)">2</text><rect x="6" y="318.5" width="2" height="1.2" fill="#333"/><rect x="6" y="331.2" width="2" height="1.2" fill="#333"/><rect x="6" y="343.9" width="2" height="1.2" fill="#333"/><rect x="4" y="356.7" width="6" height="1.2" fill="#333"/><rect x="6" y="369.4" width="2" height="1.2" fill="#333"/><rect x="6" y="382.1" width="2" height="1.2" fill="#333"/><rect x="6" y="394.8" width="2" height="1.2" fill="#333"/><text x="0" y="0" font-size="9.5" fill="#333" text-anchor="middle" font-family="Liberation Sans" transform="translate(6.8 408.0) rotate(-90) translate(0 3.4)">3</text><rect x="6" y="420.3" width="2" height="1.2" fill="#333"/><rect x="6" y="433.0" width="2" height="1.2" fill="#333"/><rect x="6" y="445.7" width="2" height="1.2" fill="#333"/><rect x="4" y="458.4" width="6" height="1.2" fill="#333"/><rect x="6" y="471.1" width="2" height="1.2" fill="#333"/><rect x="6" y="483.9" width="2" height="1.2" fill="#333"/><rect x="6" y="496.6" width="2" height="1.2" fill="#333"/></g></svg>
<div style="left:259px;top:305px;width:1px;height:20px;background:#000"></div>
<div class="t" style="left:39.5px;top:569.98px;font-size:22px;line-height:22px;font-weight:bold;color:#111;transform:scaleX(1.0442);transform-origin:0 0;">Page numbering styles</div>
<svg style="left:185px;top:470px;" width="150" height="102" viewBox="0 0 150 102"><path d="M6 96 L136 10" stroke="#000" stroke-width="3.2"/><path d="M144.5 4.8 L125.5 9.3 L131.5 12.5 L134.5 19.5 Z" fill="#000"/></svg>
<div style="left:331px;top:169px;width:420.5px;height:547.5px;background:#fff;border:1px solid #c6c6c6;box-shadow:1px 2px 4px rgba(0,0,0,0.18)"></div>
<div style="left:734px;top:171px;width:15px;height:484px;background:#e6e6e6"></div>
<div style="left:734px;top:171px;width:15px;height:14px;background:#fff;border:1px solid #c6c6c6"></div>
<div style="left:734px;top:185px;width:15px;height:35px;background:#fff;border:1px solid #c6c6c6;border-top:2px solid #c6c6c6"></div>
<div style="left:734px;top:639px;width:15px;height:15px;background:#fff;border:1px solid #c6c6c6"></div>
<svg style="left:737px;top:644px;" width="9" height="6" viewBox="0 0 9 6"><path d="M0.5 0.5 H8 L4.25 4.8 Z" fill="#666"/></svg>
<div class="t" style="left:350px;top:176.88px;font-size:12px;line-height:12px;font-weight:bold;color:#1b1b1b;transform:scaleX(0.9655);transform-origin:0 0;">Simple</div>
<div class="t" style="left:347.6px;top:202.68px;font-size:12px;line-height:12px;font-weight:bold;color:#595959;transform:scaleX(0.9524);transform-origin:0 0;">Plain Number 1</div>
<div class="t" style="left:347.6px;top:309.88px;font-size:12px;line-height:12px;font-weight:bold;color:#595959;transform:scaleX(0.9524);transform-origin:0 0;">Plain Number 2</div>
<div class="t" style="left:347.6px;top:416.68px;font-size:12px;line-height:12px;font-weight:bold;color:#595959;transform:scaleX(0.9524);transform-origin:0 0;">Plain Number 3</div>
<div style="left:347px;top:223px;width:377px;height:72px;border:1px solid #222;border-top:none"></div>
<div style="left:347px;top:330px;width:377px;height:72px;border:1px solid #222;border-top:none"></div>
<div style="left:347px;top:437px;width:377px;height:72px;border:1px solid #222;border-top:none"></div>
<div style="left:347px;top:575px;width:377px;height:72px;border:1px solid #222;border-top:none"></div>
<svg style="left:391.5px;top:259.5px;" width="4" height="5" viewBox="0 0 4 5"><path d="M0.3 1.2 L1.8 0.2 V4.3 M0.5 4.4 H3" fill="none" stroke="#000" stroke-width="1.1"/></svg>
<svg style="left:534.5px;top:366.3px;" width="4" height="5" viewBox="0 0 4 5"><path d="M0.3 1.2 L1.8 0.2 V4.3 M0.5 4.4 H3" fill="none" stroke="#000" stroke-width="1.1"/></svg>
<svg style="left:677.5px;top:473.3px;" width="4" height="5" viewBox="0 0 4 5"><path d="M0.3 1.2 L1.8 0.2 V4.3 M0.5 4.4 H3" fill="none" stroke="#000" stroke-width="1.1"/></svg>
<div style="left:333px;top:519px;width:398px;height:1px;background:#e1dfdd"></div>
<div class="t" style="left:347.6px;top:528.88px;font-size:12px;line-height:12px;font-weight:bold;color:#1b1b1b;transform:scaleX(0.9318);transform-origin:0 0;">Page X</div>
<div class="t" style="left:347.6px;top:554.88px;font-size:12px;line-height:12px;font-weight:bold;color:#595959;transform:scaleX(0.9445);transform-origin:0 0;">Accent Bar 1</div>
<div style="left:391px;top:609px;width:291px;height:1px;background:#e4e4e4"></div>
<svg style="left:390px;top:611px;" width="32" height="7" viewBox="0 0 32 7"><path d="M1.5 1.5 L2.8 0.6 V5.2 M1.5 5.3 H4" fill="none" stroke="#000" stroke-width="1"/><rect x="7.3" y="0.5" width="1.5" height="6" fill="#222"/><text x="11.6" y="5.8" font-size="6" fill="#555" letter-spacing="1.6" font-family="Liberation Sans">Page</text></svg>
<div style="left:333px;top:657px;width:418px;height:1px;background:#e1dfdd"></div>
<svg style="left:344px;top:663px;" width="19" height="19" viewBox="0 0 19 19"><circle cx="8.5" cy="8.5" r="7.3" fill="none" stroke="#333" stroke-width="1.2"/><ellipse cx="8.5" cy="8.5" rx="3.2" ry="7.3" fill="none" stroke="#333" stroke-width="1.1"/><path d="M1.2 8.5 H15.8 M2.5 4.8 H14.5 M2.5 12.2 H10" stroke="#333" stroke-width="1"/><path d="M8 15.2 H17.5 M15 12.7 L17.6 15.2 L15 17.7" fill="#fff" stroke="#1c8ee6" stroke-width="1.3"/></svg>
<div class="t" style="left:370.2px;top:667.08px;font-size:12px;line-height:12px;font-weight:normal;color:#1b1b1b;transform:scaleX(1.0075);transform-origin:0 0;"><u>M</u>ore Page Numbers from Office.com</div>
<svg style="left:736px;top:667px;" width="7" height="10" viewBox="0 0 7 10"><path d="M1 0.8 L5.5 4.8 L1 8.8" fill="none" stroke="#444" stroke-width="1.1"/></svg>
<svg style="left:346px;top:691px;" width="17" height="18" viewBox="0 0 17 18"><path d="M1.5 1 H9 L13 5 V8 M1.5 1 V16.5 H5" fill="none" stroke="#a19f9d" stroke-width="1.1"/><path d="M9 1 V5 H13" fill="none" stroke="#a19f9d" stroke-width="1"/><rect x="6" y="8" width="9.5" height="9" fill="#fff" stroke="#a19f9d" stroke-width="1.1"/><path d="M8 8 V11 H13 V8 M8.5 17 V14 H13 V17" fill="none" stroke="#a19f9d" stroke-width="1"/><path d="M3 3 H5 M3 5 H5 M2.8 4 H5.5" stroke="#a19f9d" stroke-width="0.8"/></svg>
<div class="t" style="left:370.2px;top:694.68px;font-size:12px;line-height:12px;font-weight:normal;color:#a19f9d;transform:scaleX(0.9672);transform-origin:0 0;"><u>S</u>ave Selection as Page Number (Bottom)</div>
<div style="left:330px;top:168px;width:403.8px;height:553.8px;border:3px solid #000;border-radius:6px"></div>
<svg style="left:733px;top:172px;" width="19" height="16" viewBox="0 0 19 16"><path d="M6 8.3 H18" stroke="#000" stroke-width="3"/><path d="M1 8.3 L16 2.5 L12.5 8.3 L16 14 Z" fill="#000"/></svg>
<div style="left:751px;top:137.5px;width:190px;height:174px;background:#fff;border:1px solid #c8c6c4;box-shadow:1px 2px 5px rgba(0,0,0,0.2)"></div>
<div style="left:750px;top:165px;width:190.5px;height:30px;background:#cfcfcf;border:3px solid #000;border-radius:6px"></div>
<svg style="left:765.5px;top:144.5px;" width="13" height="16" viewBox="0 0 13 16"><path d="M1 0.8 H7.8 L11.5 4.5 V15.2 H1 Z" fill="#fdfdfd" stroke="#333" stroke-width="1.1" stroke-linejoin="round"/><path d="M7.8 0.8 V4.5 H11.5" fill="none" stroke="#333" stroke-width="1"/><path d="M4.4 2.5 L3.9 8.0 M6.699999999999999 2.5 L6.199999999999999 8.0 M2.8 4.2 H8.0 M2.5999999999999996 6.3 H7.8" stroke="#1c8ee6" stroke-width="1.3"/></svg>
<div class="t" style="left:789.3px;top:147.08px;font-size:12px;line-height:12px;font-weight:normal;color:#1b1b1b;transform:scaleX(0.9834);transform-origin:0 0;"><u>T</u>op of Page</div>
<svg style="left:926px;top:147.8px;" width="7" height="10" viewBox="0 0 7 10"><path d="M1 0.8 L5.5 4.6 L1 8.5" fill="none" stroke="#333" stroke-width="1.1"/></svg>
<svg style="left:765.5px;top:172px;" width="13" height="16" viewBox="0 0 13 16"><path d="M1 0.8 H7.8 L11.5 4.5 V15.2 H1 Z" fill="#fdfdfd" stroke="#333" stroke-width="1.1" stroke-linejoin="round"/><path d="M7.8 0.8 V4.5 H11.5" fill="none" stroke="#333" stroke-width="1"/><path d="M5.1 9 L4.6 14.5 M7.4 9 L6.9 14.5 M3.5 10.7 H8.7 M3.3 12.8 H8.5" stroke="#1c8ee6" stroke-width="1.3"/></svg>
<div class="t" style="left:789.3px;top:175.08px;font-size:12px;line-height:12px;font-weight:normal;color:#1b1b1b;transform:scaleX(0.9972);transform-origin:0 0;"><u>B</u>ottom of Page</div>
<svg style="left:926px;top:175.8px;" width="7" height="10" viewBox="0 0 7 10"><path d="M1 0.8 L5.5 4.6 L1 8.5" fill="none" stroke="#333" stroke-width="1.1"/></svg>
<svg style="left:765.5px;top:200px;" width="13" height="16" viewBox="0 0 13 16"><path d="M1 0.8 H7.8 L11.5 4.5 V15.2 H1 Z" fill="#fdfdfd" stroke="#333" stroke-width="1.1" stroke-linejoin="round"/><path d="M7.8 0.8 V4.5 H11.5" fill="none" stroke="#333" stroke-width="1"/><path d="M4.1 9 L3.6 14.5 M6.4 9 L5.9 14.5 M2.5 10.7 H7.7 M2.3 12.8 H7.5" stroke="#1c8ee6" stroke-width="1.3"/><path d="M9 8.5 V14" stroke="#333" stroke-width="1"/></svg>
<div class="t" style="left:789.3px;top:203.28px;font-size:12px;line-height:12px;font-weight:normal;color:#1b1b1b;transform:scaleX(0.9586);transform-origin:0 0;"><u>P</u>age Margins</div>
<svg style="left:926px;top:204.0px;" width="7" height="10" viewBox="0 0 7 10"><path d="M1 0.8 L5.5 4.6 L1 8.5" fill="none" stroke="#333" stroke-width="1.1"/></svg>
<svg style="left:765.5px;top:228.5px;" width="13" height="16" viewBox="0 0 13 16"><path d="M1 0.8 H7.8 L11.5 4.5 V15.2 H1 Z" fill="#fdfdfd" stroke="#333" stroke-width="1.1" stroke-linejoin="round"/><path d="M7.8 0.8 V4.5 H11.5" fill="none" stroke="#333" stroke-width="1"/><path d="M5.1 7.5 L4.6 13.0 M7.4 7.5 L6.9 13.0 M3.5 9.2 H8.7 M3.3 11.3 H8.5" stroke="#1c8ee6" stroke-width="1.3"/></svg>
<div class="t" style="left:789.3px;top:230.88px;font-size:12px;line-height:12px;font-weight:normal;color:#1b1b1b;transform:scaleX(0.9878);transform-origin:0 0;"><u>C</u>urrent Position</div>
<svg style="left:926px;top:231.60000000000002px;" width="7" height="10" viewBox="0 0 7 10"><path d="M1 0.8 L5.5 4.6 L1 8.5" fill="none" stroke="#333" stroke-width="1.1"/></svg>
<div style="left:784px;top:252px;width:156px;height:1px;background:#e1dfdd"></div>
<svg style="left:765.5px;top:259px;" width="16" height="17" viewBox="0 0 16 17"><path d="M1 0.8 H7.8 L11.5 4.5 V15.2 H1 Z" fill="#fdfdfd" stroke="#333" stroke-width="1.1" stroke-linejoin="round"/><path d="M7.8 0.8 V4.5 H11.5" fill="none" stroke="#333" stroke-width="1"/><path d="M4.1 2.5 L3.6 8.0 M6.4 2.5 L5.9 8.0 M2.5 4.2 H7.7 M2.3 6.3 H7.5" stroke="#1c8ee6" stroke-width="1.3"/><path d="M5.5 12.5 L14.5 3.5" stroke="#fdfdfd" stroke-width="4"/><path d="M5.5 12.5 L14.5 3.5" stroke="#333" stroke-width="2.6"/><path d="M6 12 L14 4" stroke="#e8e8e8" stroke-width="0.9"/><path d="M1.2 16 C1.5 13 3 11.3 6 11.8 C6.8 14.2 4.5 16.4 1.2 16 Z" fill="#2b88d8"/></svg>
<div class="t" style="left:789.3px;top:261.78px;font-size:12px;line-height:12px;font-weight:normal;color:#1b1b1b;transform:scaleX(0.9703);transform-origin:0 0;"><u>F</u>ormat Page Numbers...</div>
<svg style="left:765.5px;top:287.5px;" width="15" height="17" viewBox="0 0 15 17"><path d="M1 0.8 H7.8 L11.5 4.5 V8 M6 15.2 H1 V0.8" fill="#fdfdfd" stroke="#333" stroke-width="1.1" stroke-linejoin="round"/><path d="M7.8 0.8 V4.5 H11.5" fill="none" stroke="#333" stroke-width="1"/><path d="M4.3 2.8 L3.8 8.3 M6.6 2.8 L6.1 8.3 M2.7 4.5 H7.9 M2.5 6.6 H7.7" stroke="#333" stroke-width="1.1"/><path d="M7.5 9 L14 15.5 M14 9 L7.5 15.5" stroke="#e8423f" stroke-width="1.3"/></svg>
<div class="t" style="left:789.3px;top:289.88px;font-size:12px;line-height:12px;font-weight:normal;color:#1b1b1b;transform:scaleX(0.9644);transform-origin:0 0;"><u>R</u>emove Page Numbers</div>
<svg style="left:799px;top:188px;" width="14" height="21" viewBox="0 0 14 21"><path d="M1 1 V16 L4.5 12.5 L7.5 19 L10 18 L7 11.5 H12 Z" fill="#fff" stroke="#000" stroke-width="1"/></svg>
<div class="t" style="left:8.2px;top:711.58px;font-size:12px;line-height:12px;font-weight:normal;color:#444;transform:scaleX(0.9122);transform-origin:0 0;">Page 1 of 1</div>
<div class="t" style="left:85.4px;top:711.58px;font-size:12px;line-height:12px;font-weight:normal;color:#444;transform:scaleX(0.9636);transform-origin:0 0;">0 words</div>
<svg style="left:144px;top:709px;" width="16" height="14" viewBox="0 0 16 14"><path d="M1 1.5 C3 1 5.5 1 7.5 2.5 C9.5 1 12 1 14.5 1.5 V11 C12 10.5 9.5 11 7.5 12.5 C5.5 11 3 10.5 1 11 Z M7.5 2.5 V12.5" fill="none" stroke="#444" stroke-width="1.1"/><path d="M8.5 9 L10.5 11.5 L15 6" fill="none" stroke="#444" stroke-width="1.1"/></svg>
<svg style="left:179px;top:709px;" width="16" height="15" viewBox="0 0 16 15"><circle cx="7" cy="2" r="1.5" fill="none" stroke="#444" stroke-width="1"/><path d="M1 3.5 C3 5 5 5.5 7 5.5 C9 5.5 11 5 13 3.5 M5 5.5 V13 M9 5.5 V8" fill="none" stroke="#444" stroke-width="1.1"/><path d="M8 11 L10 13.5 L15 8" fill="none" stroke="#444" stroke-width="1.1"/></svg>
<div class="t" style="left:199px;top:711.58px;font-size:12px;line-height:12px;font-weight:normal;color:#444;transform:scaleX(0.9558);transform-origin:0 0;">Accessibility: Good to go</div>
<svg style="left:803px;top:708px;" width="16" height="16" viewBox="0 0 16 16"><path d="M1 4 V1 H4 M12 1 H15 V4 M15 12 V15 H12 M4 15 H1 V12" fill="none" stroke="#444" stroke-width="1.1"/><path d="M4.5 3.5 H9.5 L12 6 V12.5 H4.5 Z" fill="none" stroke="#444" stroke-width="1.1"/></svg>
<div class="t" style="left:821px;top:711.58px;font-size:12px;line-height:12px;font-weight:normal;color:#444;transform:scaleX(0.9055);transform-origin:0 0;">Focus</div>
<svg style="left:875px;top:709px;" width="15" height="14" viewBox="0 0 15 14"><path d="M1 1.5 H6 C7 1.5 7.5 2 7.5 3 V12.5 C7.5 11.5 7 11.2 6 11.2 H1 Z M14 1.5 H9 C8 1.5 7.5 2 7.5 3 M14 1.5 V11.2 H9 C8 11.2 7.5 11.5 7.5 12.5" fill="none" stroke="#444" stroke-width="1.1"/><path d="M2.5 4 H6 M2.5 6.5 H6 M9 4 H12.5 M9 6.5 H12.5" stroke="#444" stroke-width="0.9"/></svg>
<div style="left:903px;top:706px;width:39.5px;height:21px;background:#d2d0ce"></div>
<svg style="left:915px;top:709px;" width="14" height="14" viewBox="0 0 14 14"><rect x="1.5" y="0.8" width="11" height="12.4" fill="none" stroke="#444" stroke-width="1.1"/><path d="M3.5 3.5 H10.5 M3.5 5.5 H10.5 M3.5 7.5 H10.5 M3.5 9.5 H10.5" stroke="#444" stroke-width="0.9"/></svg>
<svg style="left:955px;top:709px;" width="17" height="15" viewBox="0 0 17 15"><rect x="1" y="0.8" width="11" height="12.4" fill="none" stroke="#444" stroke-width="1.1"/><path d="M3 3.5 H10 M3 5.5 H8" stroke="#444" stroke-width="0.9"/><circle cx="11.5" cy="10" r="4" fill="#f3f2f1" stroke="#444" stroke-width="1.1"/><path d="M7.5 10 H15.5 M11.5 6 V14" stroke="#444" stroke-width="0.9"/></svg>
<div style="left:989px;top:715px;width:8px;height:1px;background:#444"></div>
<div style="left:1002px;top:715.5px;width:99px;height:1px;background:#888"></div>
<div style="left:1051px;top:710px;width:5px;height:12px;background:#444"></div>
<svg style="left:1106px;top:710px;" width="10" height="10" viewBox="0 0 10 10"><path d="M5 0.5 V9.5 M0.5 5 H9.5" stroke="#444" stroke-width="1"/></svg>
<div class="t" style="left:1128px;top:711.58px;font-size:12px;line-height:12px;font-weight:normal;color:#444;transform:scaleX(0.8566);transform-origin:0 0;">106%</div>
</body></html>
